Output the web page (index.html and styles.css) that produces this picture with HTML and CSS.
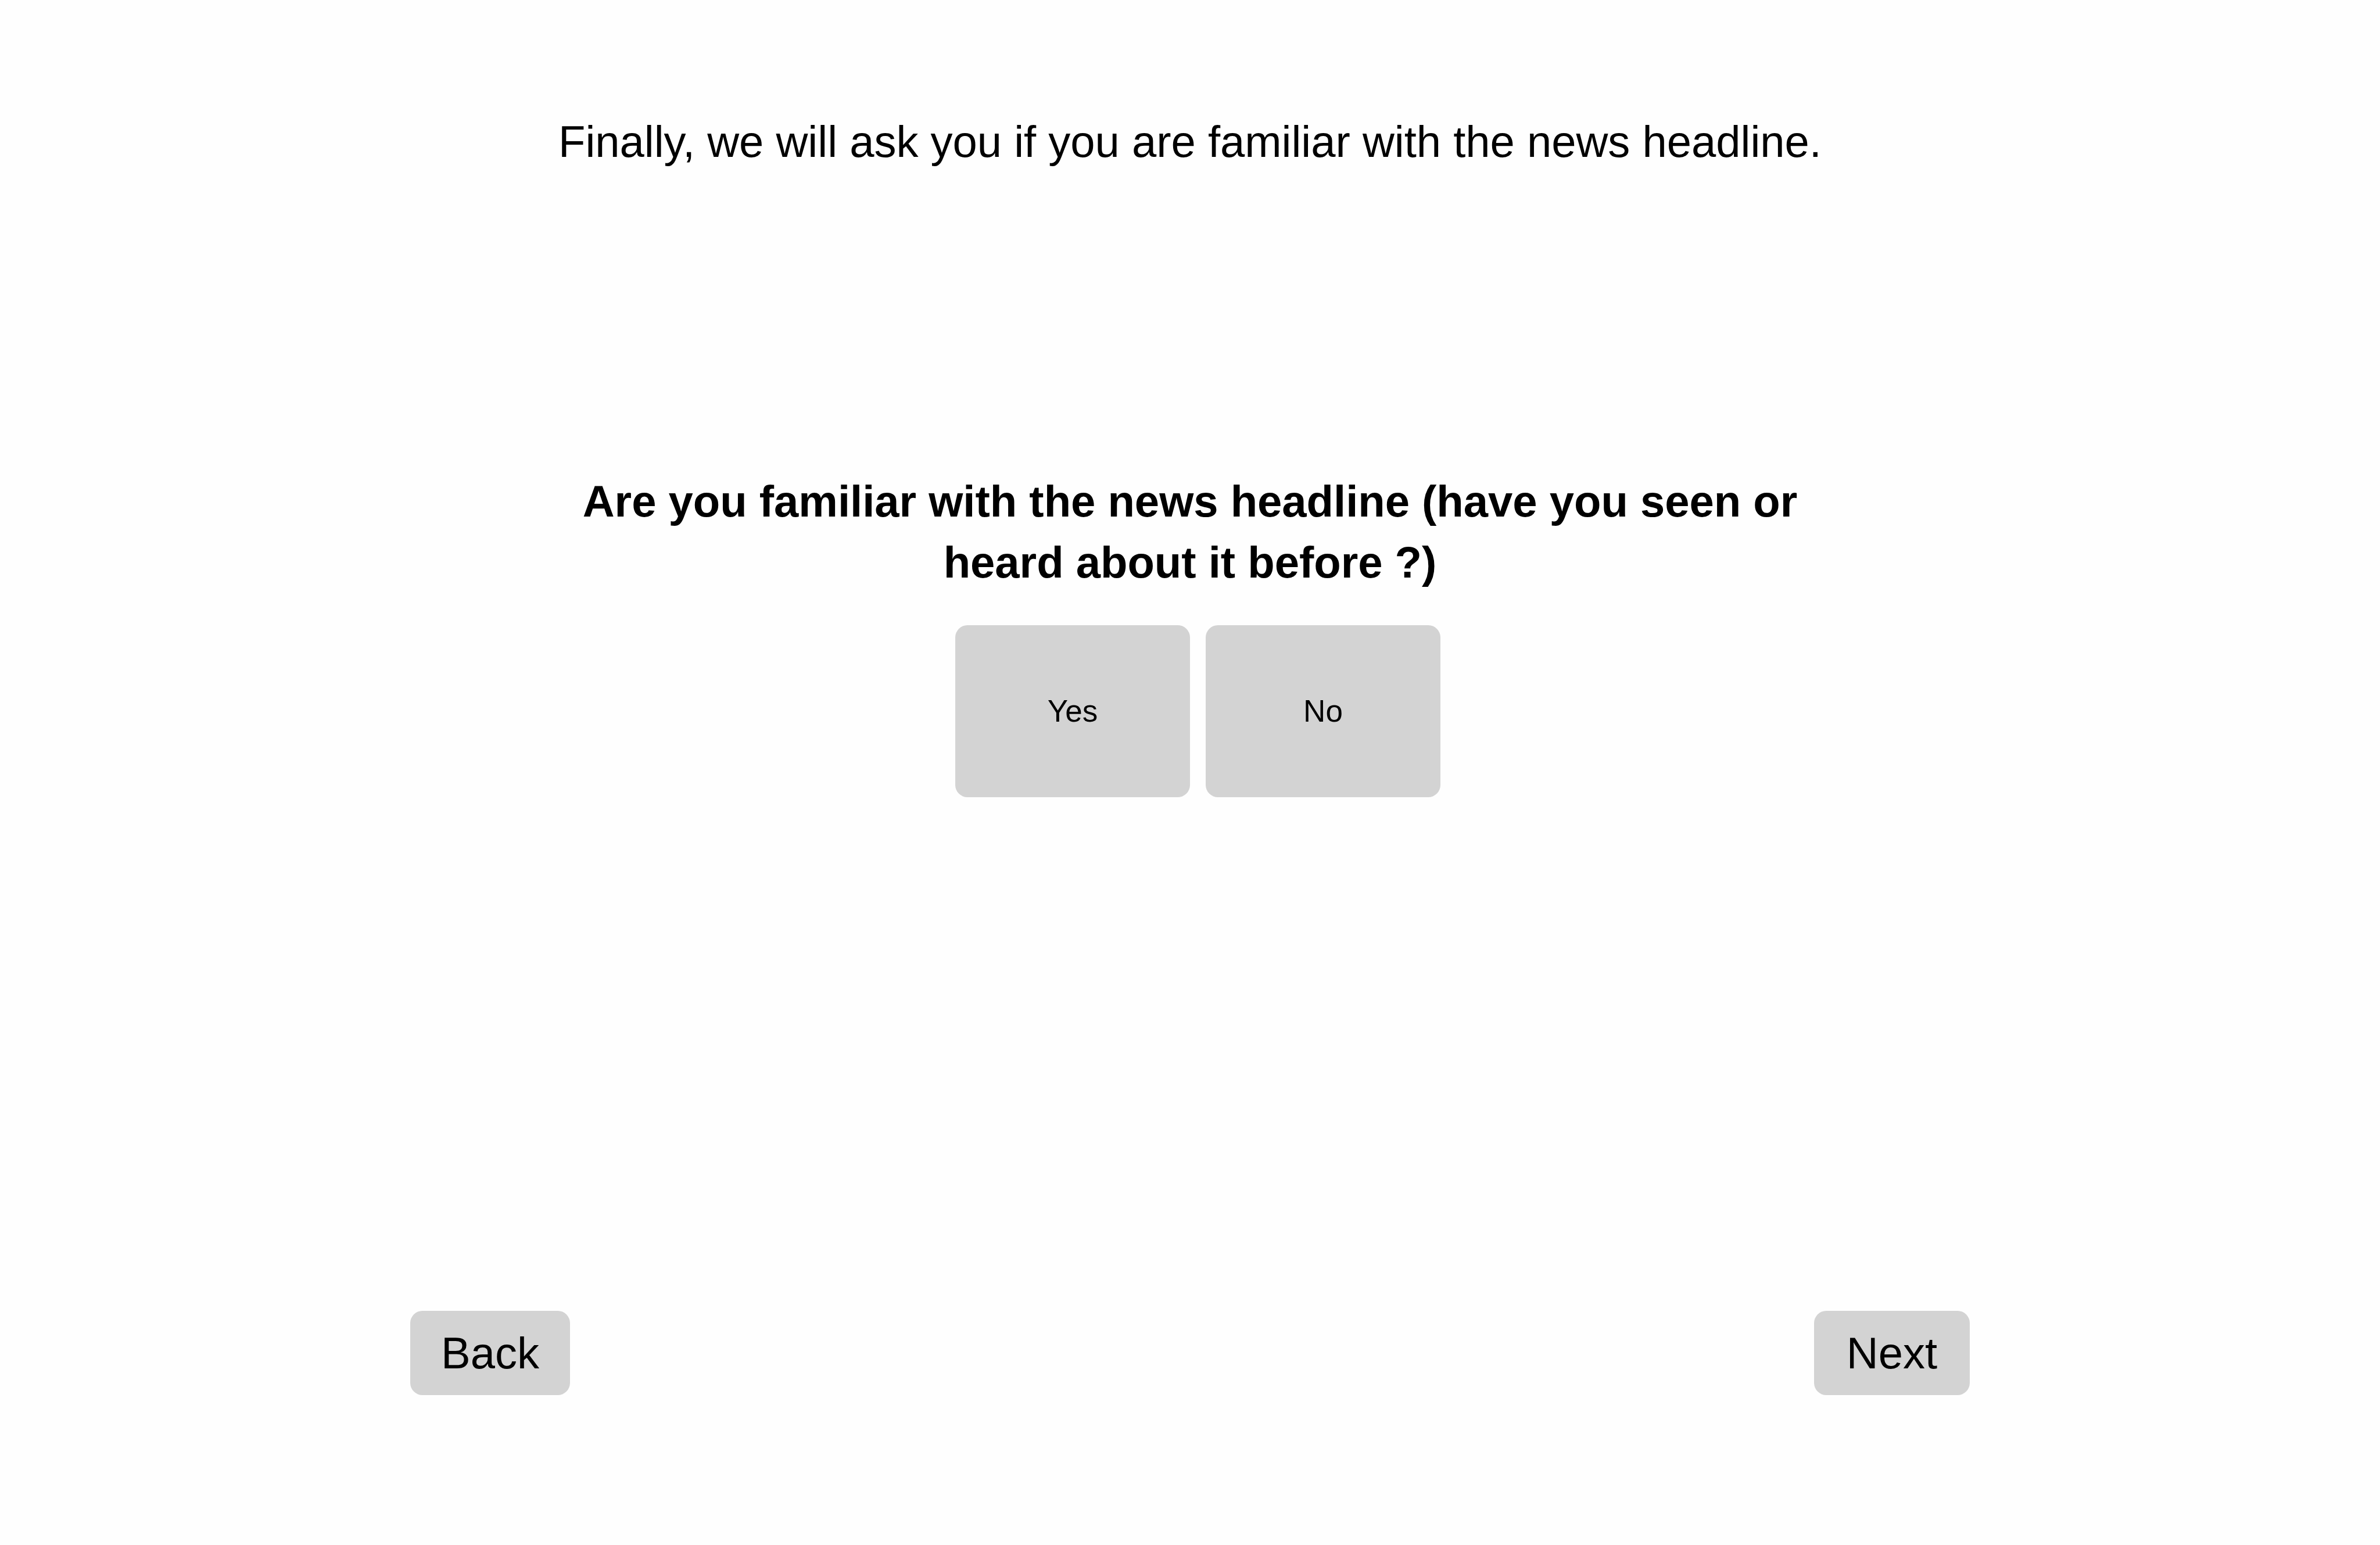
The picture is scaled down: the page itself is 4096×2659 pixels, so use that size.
FILE: index.html
```html
<!DOCTYPE html>
<html lang="en">
<head>
<meta charset="utf-8">
<meta name="viewport" content="width=device-width, initial-scale=1">
<title>News headline familiarity</title>
<link rel="stylesheet" href="styles.css">
</head>
<body>
<main class="survey">
  <p class="intro">Finally, we will ask you if you are familiar with the news headline.</p>
  <section class="question" aria-labelledby="question-title">
    <h1 class="question-title" id="question-title">Are you familiar with the news headline (have you seen or heard about it before ?)</h1>
    <div class="answers">
      <button class="button answer" type="button">Yes</button>
      <button class="button answer" type="button">No</button>
    </div>
  </section>
  <nav class="pager" aria-label="Survey pages">
    <button class="button back" type="button">Back</button>
    <button class="button next" type="button">Next</button>
  </nav>
</main>
</body>
</html>
```

FILE: styles.css
```css
* {
  box-sizing: border-box;
}

body {
  margin: 0;
  background: #fefefe;
  color: #000;
  font-family: "Liberation Sans", Arial, Helvetica, sans-serif;
  font-size: 76px;
  line-height: 105px;
}

.survey {
  display: flex;
  flex-direction: column;
  width: 100%;
  max-width: 2684px;
  min-height: 100vh;
  margin: 0 auto;
  padding: 191px 0 258px;
}

.intro,
.question {
  width: 100%;
  max-width: 2240px;
  margin: 0 auto;
  text-align: center;
}

.question {
  margin-top: 514px;
}

.question-title {
  margin: 0;
  font-size: inherit;
  font-weight: bold;
}

.answers {
  display: flex;
  justify-content: center;
  margin-top: 56px;
}

.button {
  padding: 0;
  border: 0;
  border-radius: 21px;
  background: #d3d3d3;
  color: inherit;
  font: inherit;
  cursor: pointer;
}

.answer {
  width: 404px;
  height: 296px;
  margin-left: 27px;
  padding-bottom: 2px;
  font-size: 53px;
}

.pager {
  display: flex;
  justify-content: space-between;
  margin-top: auto;
}

.back,
.next {
  height: 145px;
}

.back {
  width: 275px;
}

.next {
  width: 268px;
}
```
